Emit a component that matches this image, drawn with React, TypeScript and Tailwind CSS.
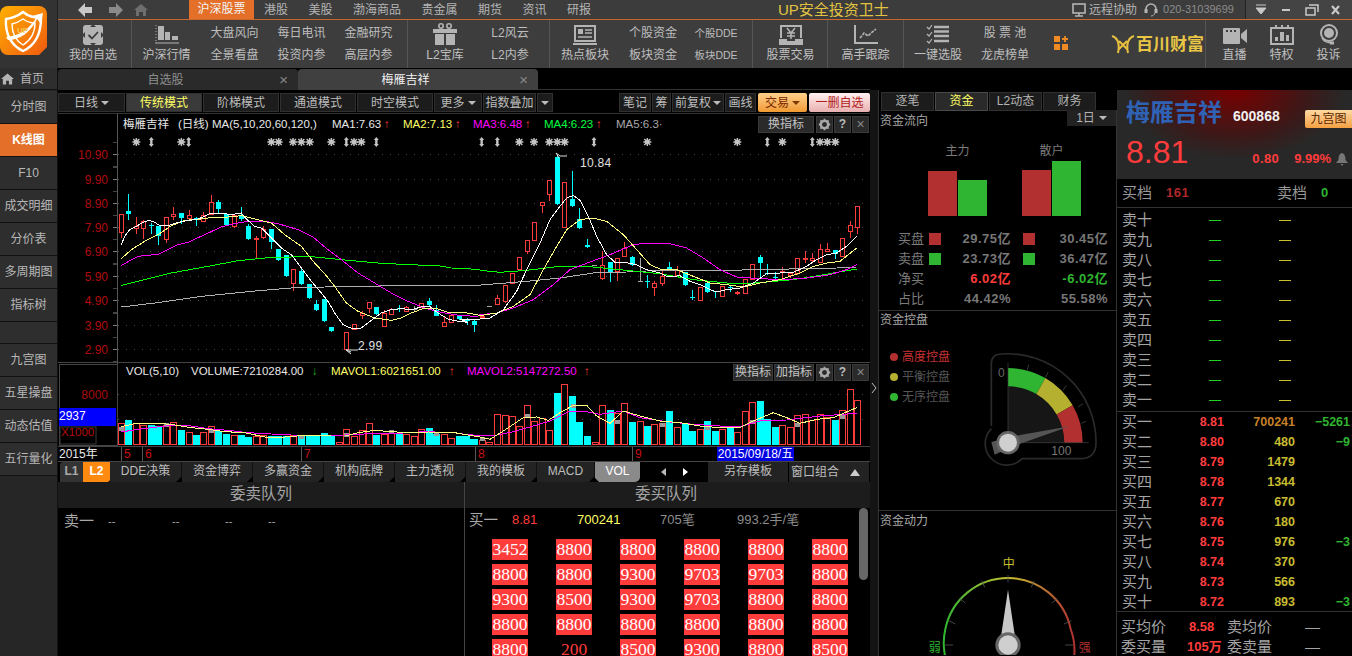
import { ReactNode } from "react";

// candle: [x, bodyTop, bodyBottom, high, low, kind] in 3x crop units, kind 0 red, 1 cyan, 2 grey
type Candle = [number, number, number, number, number, number];

const left: Candle[] = [
  [190, 303, 358, 303, 375, 0], [211, 295, 303, 243, 320, 1], [233, 338, 346, 312, 362, 0], [256, 325, 345, 322, 378, 0],
  [279, 335, 338, 330, 362, 1], [301, 340, 368, 340, 396, 1], [325, 313, 377, 313, 390, 0], [346, 304, 309, 282, 320, 0],
  [370, 300, 316, 300, 332, 1], [392, 307, 315, 292, 322, 0], [414, 315, 317, 312, 340, 1], [436, 305, 323, 298, 328, 0],
  [459, 268, 303, 246, 305, 0], [481, 268, 288, 261, 303, 1], [505, 302, 336, 300, 340, 1], [527, 307, 340, 302, 344, 0],
  [550, 305, 318, 282, 325, 1], [571, 340, 378, 334, 380, 1], [595, 375, 379, 370, 435, 0], [616, 348, 372, 338, 377, 0],
  [640, 348, 386, 348, 408, 1], [661, 408, 441, 408, 443, 1], [685, 426, 489, 426, 491, 1], [706, 469, 509, 467, 533, 0],
  [730, 474, 513, 467, 515, 1], [754, 513, 555, 513, 557, 1], [775, 573, 591, 560, 594, 1], [798, 558, 624, 558, 627, 1],
  [820, 642, 654, 642, 656, 1], [865, 658, 707, 658, 707, 0], [889, 632, 648, 632, 650, 0], [911, 600, 607, 595, 618, 0],
  [934, 568, 584, 568, 600, 0], [955, 582, 604, 582, 606, 1], [979, 601, 638, 592, 638, 0], [1000, 587, 604, 584, 604, 0],
  [1024, 585, 587, 575, 597, 1], [1045, 583, 594, 580, 598, 0], [1069, 588, 590, 580, 596, 2], [1090, 569, 583, 569, 585, 0],
  [1114, 565, 576, 555, 580, 1], [1135, 590, 609, 576, 610, 1], [1159, 628, 640, 610, 640, 0], [1180, 606, 627, 604, 628, 0],
  [1204, 610, 618, 610, 622, 1], [1226, 622, 624, 615, 636, 1], [1249, 625, 637, 620, 657, 1],
];

const right: Candle[] = [
  [65, 608, 612, 606, 614, 0], [88, 579, 581, 579, 581, 2], [112, 556, 572, 546, 572, 0], [134, 516, 563, 516, 570, 0],
  [157, 479, 509, 479, 511, 0], [178, 433, 467, 433, 472, 0], [202, 382, 413, 382, 422, 0], [223, 328, 382, 328, 382, 0],
  [247, 268, 277, 268, 300, 0], [268, 202, 242, 202, 264, 0], [292, 132, 273, 125, 275, 1], [313, 208, 341, 208, 341, 0],
  [337, 258, 279, 174, 282, 1], [358, 318, 345, 286, 348, 1], [382, 396, 402, 378, 404, 1], [402, 455, 457, 455, 457, 2],
  [427, 457, 495, 414, 500, 0], [449, 447, 479, 447, 507, 1], [472, 436, 475, 436, 503, 0], [493, 405, 428, 388, 428, 0],
  [517, 432, 456, 430, 458, 1], [539, 504, 506, 436, 506, 2], [562, 504, 506, 485, 524, 1], [583, 511, 521, 505, 548, 0],
  [607, 488, 509, 470, 518, 0], [628, 463, 469, 447, 470, 1], [652, 472, 485, 460, 487, 0], [676, 478, 515, 478, 518, 1],
  [697, 552, 556, 532, 560, 1], [721, 523, 560, 523, 560, 0], [742, 510, 537, 508, 540, 1], [766, 535, 538, 535, 555, 1],
  [787, 520, 548, 518, 552, 0], [811, 522, 524, 518, 538, 1], [832, 538, 541, 535, 545, 0], [856, 497, 539, 497, 539, 0],
  [877, 454, 499, 454, 502, 0], [901, 432, 450, 426, 494, 1], [922, 480, 484, 453, 486, 1], [946, 492, 495, 478, 503, 1],
  [967, 474, 478, 462, 494, 0], [991, 481, 485, 478, 494, 0], [1012, 436, 481, 436, 485, 0], [1036, 436, 438, 414, 449, 0],
  [1057, 436, 442, 420, 449, 0], [1081, 408, 448, 392, 450, 0], [1102, 408, 414, 390, 418, 0], [1126, 411, 423, 411, 438, 1],
  [1147, 376, 428, 376, 432, 0], [1171, 337, 355, 324, 375, 0], [1192, 280, 343, 280, 362, 0],
];

const candles: Candle[] = [...left, ...right.map((c) => [c[0] + 1206, c[1], c[2], c[3], c[4], c[5]] as Candle)];

const maLines: { color: string; a: number[]; b: number[] }[] = [
  { color: "#b0b0b0", a: [190, 582, 290, 570, 430, 550, 580, 535, 700, 525, 800, 522, 1080, 517, 1258, 517], b: [100, 513, 200, 505, 300, 495, 400, 480, 500, 477, 600, 472, 800, 472, 1130, 465, 1190, 462] },
  { color: "#00ff00", a: [190, 517, 260, 500, 340, 480, 450, 460, 540, 443, 640, 433, 760, 431, 850, 440, 960, 450, 1050, 455, 1140, 458, 1180, 465, 1258, 469], b: [70, 473, 120, 478, 200, 472, 300, 460, 400, 462, 500, 472, 600, 482, 700, 500, 800, 510, 860, 512, 920, 507, 1000, 500, 1080, 487, 1190, 468] },
  { color: "#ff00ff", a: [190, 457, 240, 430, 300, 424, 360, 395, 390, 388, 440, 365, 490, 342, 530, 332, 570, 325, 620, 325, 660, 332, 720, 350, 765, 372, 810, 410, 850, 440, 900, 480, 950, 510, 1000, 540, 1050, 565, 1100, 585, 1150, 598, 1210, 608, 1258, 610], b: [60, 605, 110, 600, 160, 585, 220, 560, 280, 515, 330, 470, 390, 447, 450, 425, 520, 395, 560, 390, 630, 392, 680, 405, 730, 435, 780, 470, 830, 492, 900, 497, 970, 500, 1040, 495, 1110, 485, 1160, 470, 1190, 455] },
  { color: "#ffff80", a: [190, 437, 220, 410, 260, 385, 300, 365, 340, 338, 380, 322, 430, 318, 470, 312, 510, 312, 550, 308, 590, 318, 640, 330, 680, 365, 730, 400, 770, 450, 800, 482, 830, 520, 865, 570, 900, 595, 950, 615, 1000, 622, 1030, 615, 1060, 600, 1100, 585, 1130, 585, 1170, 598, 1210, 597, 1258, 605], b: [60, 608, 110, 600, 160, 580, 210, 545, 250, 470, 290, 400, 320, 350, 360, 320, 400, 315, 440, 325, 490, 365, 530, 410, 570, 455, 600, 468, 650, 470, 700, 490, 750, 510, 800, 515, 850, 522, 900, 510, 960, 500, 1020, 480, 1060, 460, 1100, 450, 1140, 445, 1190, 405] },
  { color: "#ffffff", a: [190, 395, 200, 370, 215, 350, 235, 340, 255, 328, 275, 322, 290, 328, 305, 338, 330, 338, 360, 328, 390, 322, 415, 320, 440, 310, 460, 300, 490, 300, 520, 305, 550, 300, 565, 318, 590, 340, 610, 345, 640, 375, 670, 405, 700, 425, 730, 465, 760, 505, 790, 540, 810, 565, 830, 600, 855, 635, 885, 648, 910, 645, 940, 622, 970, 600, 1000, 590, 1030, 587, 1060, 590, 1090, 582, 1115, 580, 1140, 600, 1170, 618, 1200, 625, 1230, 628], b: [0, 618, 40, 620, 90, 615, 130, 590, 170, 535, 200, 470, 240, 390, 270, 320, 300, 280, 320, 255, 340, 247, 360, 262, 385, 310, 410, 370, 440, 425, 465, 448, 500, 449, 530, 455, 560, 470, 600, 480, 625, 492, 660, 488, 690, 505, 720, 515, 750, 530, 770, 537, 800, 530, 840, 525, 880, 510, 920, 482, 960, 480, 1000, 478, 1040, 460, 1070, 440, 1100, 425, 1130, 420, 1160, 400, 1190, 370] },
];

// volume bar: [x, top, kind]
const volA: number[][] = [
  [190, 187, 0], [211, 177, 1], [235, 187, 0], [256, 193, 0], [279, 192, 1], [301, 195, 1], [325, 192, 0], [346, 184, 0], [370, 207, 1], [392, 214, 0],
  [414, 222, 1], [436, 213, 0], [459, 196, 0], [481, 210, 1], [505, 218, 1], [527, 223, 0], [550, 222, 1], [571, 228, 1], [595, 226, 0], [616, 222, 0],
  [640, 226, 1], [661, 226, 1], [685, 226, 1], [706, 222, 0], [730, 226, 1], [754, 226, 1], [775, 226, 1], [798, 216, 1], [820, 224, 1], [843, 244, 0],
  [865, 205, 0], [889, 224, 0], [911, 208, 0], [934, 187, 0], [955, 222, 1], [979, 218, 0], [1000, 216, 0], [1024, 218, 1], [1045, 218, 0], [1069, 226, 0],
  [1090, 205, 0], [1114, 201, 1], [1135, 218, 1], [1159, 220, 0], [1180, 230, 0], [1204, 225, 1], [1226, 233, 1],
];
const volB: number[][] = [
  [19, 225, 1], [42, 233, 1], [65, 238, 0], [88, 244, 0], [112, 160, 0], [134, 162, 0], [157, 166, 0], [178, 195, 0], [202, 133, 0], [223, 180, 0],
  [247, 172, 0], [268, 208, 0], [292, 96, 1], [313, 70, 0], [337, 105, 1], [358, 183, 1], [382, 225, 1], [404, 244, 0], [427, 133, 0], [449, 147, 1],
  [472, 155, 0], [493, 127, 0], [517, 183, 1], [539, 181, 0], [562, 194, 1], [583, 190, 0], [607, 185, 0], [628, 150, 1], [652, 199, 0], [676, 188, 1],
  [697, 210, 1], [721, 205, 0], [742, 180, 1], [766, 210, 1], [787, 203, 0], [811, 200, 1], [832, 214, 0], [856, 151, 0], [877, 124, 0], [901, 120, 1],
  [922, 175, 1], [946, 198, 1], [967, 193, 0], [991, 199, 0], [1012, 163, 0], [1036, 160, 0], [1057, 176, 0], [1081, 160, 0], [1102, 167, 0], [1126, 178, 1],
  [1147, 148, 0], [1171, 85, 0], [1192, 118, 0],
];
const volLines = [
  { color: "#ff00ff", a: [190, 213, 240, 205, 290, 199, 340, 193, 400, 195, 450, 203, 510, 208, 570, 215, 640, 219, 700, 222, 780, 223, 860, 222, 940, 218, 1020, 217, 1100, 212, 1190, 215], b: [0, 218, 70, 225, 110, 222, 160, 212, 220, 195, 270, 180, 330, 150, 370, 150, 420, 160, 490, 150, 540, 170, 620, 182, 700, 190, 780, 195, 840, 197, 900, 180, 980, 177, 1080, 165, 1190, 157] },
  { color: "#ffff80", a: [190, 197, 235, 187, 290, 187, 340, 190, 400, 200, 450, 205, 500, 212, 560, 215, 620, 228, 680, 228, 730, 224, 820, 225, 860, 225, 900, 215, 950, 208, 1000, 212, 1050, 215, 1110, 213, 1190, 215], b: [0, 218, 60, 228, 90, 235, 130, 210, 190, 170, 230, 168, 265, 178, 300, 155, 340, 133, 380, 133, 410, 165, 450, 187, 490, 150, 540, 165, 600, 180, 660, 185, 720, 195, 780, 200, 840, 200, 880, 180, 940, 155, 980, 170, 1020, 187, 1070, 175, 1120, 170, 1190, 140] },
];
const volDots = [[121, 426], [166, 422], [211, 428], [301, 434], [346, 432], [391, 429], [436, 431], [482, 436], [527, 413], [573, 403], [617, 419], [662, 422], [707, 425], [752, 419], [797, 422], [842, 414]];

const toPoints = (a: number[], b: number[], yBase: number) => {
  const pts: string[] = [];
  for (let i = 0; i < a.length; i += 2) pts.push(`${58 + a[i] / 3},${yBase + a[i + 1] / 3}`);
  for (let i = 0; i < b.length; i += 2) pts.push(`${460 + b[i] / 3},${yBase + b[i + 1] / 3}`);
  return pts.join(" ");
};

const stars = [235, 370, 640, 662, 705, 730, 755, 820, 888, 910, 1384, 1428, 1474, 1498, 1520, 1768, 2038, 2173, 2286, 2308, 2332];
const diamonds = [280, 392, 865, 955, 1271, 1318, 1608, 2128, 2263];

const Star = ({ x, y }: { x: number; y: number }) => (
  <g stroke="#c4c4c4" strokeWidth="1.4">
    <path d={`M${x - 4} ${y}H${x + 4}M${x} ${y - 4}V${y + 4}M${x - 3} ${y - 3}L${x + 3} ${y + 3}M${x + 3} ${y - 3}L${x - 3} ${y + 3}`} />
    <circle cx={x} cy={y} r="2.4" fill="#c4c4c4" stroke="none" />
  </g>
);

const Diamond = ({ x, y }: { x: number; y: number }) => (
  <path d={`M${x} ${y - 5}L${x + 2.5} ${y - 2}H${x + 1.2}V${y + 2}H${x + 2.5}L${x} ${y + 5}L${x - 2.5} ${y + 2}H${x - 1.2}V${y - 2}H${x - 2.5}Z`} fill="#c4c4c4" />
);

const priceTicks = [
  ["10.90", 124], ["9.90", 197], ["8.90", 270], ["7.90", 343], ["6.90", 415], ["5.90", 489], ["4.90", 562], ["3.90", 636], ["2.90", 709],
] as [string, number][];

const Legend = ({ x, y, color, children }: { x: number; y: number; color: string; children: ReactNode }) => (
  <text x={x} y={y} fill={color} fontSize="11.5">{children}</text>
);

const KChart = () => (
  <svg viewBox="58 113 812 250" className="block w-[812px] h-[250px]">
    {priceTicks.map(([label, z]) => {
      const y = Math.round(112 + z / 3) + 0.5;
      return (
        <g key={label}>
          <text x="108" y={y + 4} textAnchor="end" fill="#b00c0c" fontSize="12">{label}</text>
          <path d={`M113 ${y}H118`} stroke="#777" />
          <path d={`M113 ${y + 12}H118M113 ${y - 12}H118`} stroke="#444" />
          <line x1="118" x2="866" y1={y} y2={y} stroke="#444" strokeDasharray="1 7" />
        </g>
      );
    })}
    <line x1="117.5" x2="117.5" y1="113" y2="363" stroke="#555" />
    {candles.map(([z, top, bot, hi, lo, kind], i) => {
      const x = Math.round(58 + z / 3);
      const color = kind === 0 ? "#ff3c3c" : kind === 1 ? "#00ffff" : "#a8a8a8";
      const t = Math.round(112 + top / 3);
      const b = Math.round(112 + bot / 3);
      return (
        <g key={i} shapeRendering="crispEdges">
          <line x1={x + 0.5} x2={x + 0.5} y1={112 + hi / 3} y2={112 + lo / 3} stroke={color} />
          {kind === 0 ? (
            <rect x={x - 2 + 0.5} y={t + 0.5} width="4" height={Math.max(b - t, 1)} fill="#000" stroke={color} />
          ) : (
            <rect x={x - 2} y={t} width="5" height={Math.max(b - t, 1)} fill={color} />
          )}
        </g>
      );
    })}
    {maLines.map((l) => (
      <polyline key={l.color} points={toPoints(l.a, l.b, 112)} fill="none" stroke={l.color} strokeWidth="1" shapeRendering="crispEdges" />
    ))}
    {stars.map((z) => <Star key={z} x={58 + z / 3} y={141} />)}
    {diamonds.map((z) => <Diamond key={z} x={58 + z / 3} y={141} />)}

    <text x="123" y="127" fill="#e8e8e8" fontSize="11.5">梅雁吉祥</text>
    <text x="178" y="127" fill="#e8e8e8" fontSize="11.5">(日线)</text>
    <text x="212" y="127" fill="#e8e8e8" fontSize="11.5">MA(5,10,20,60,120,)</text>
    <Legend x={332} y={127} color="#e8e8e8">MA1:7.63</Legend>
    <Legend x={384} y={127} color="#ff3c3c">↑</Legend>
    <Legend x={403} y={127} color="#ffff66">MA2:7.13</Legend>
    <Legend x={455} y={127} color="#ff3c3c">↑</Legend>
    <Legend x={473} y={127} color="#ff00ff">MA3:6.48</Legend>
    <Legend x={525} y={127} color="#ff3c3c">↑</Legend>
    <Legend x={544} y={127} color="#00ff40">MA4:6.23</Legend>
    <Legend x={596} y={127} color="#ff3c3c">↑</Legend>
    <Legend x={616} y={127} color="#a8a8a8">MA5:6.3·</Legend>

    <path d="M559 157L556 152L560 155H567" fill="none" stroke="#ddd" />
    <text x="580" y="166" fill="#e0e0e0" fontSize="12" letterSpacing=".3">10.84</text>
    <path d="M351 351L346 349H358M346 349L351 353" fill="none" stroke="#ddd" />
    <text x="358" y="349" fill="#e0e0e0" fontSize="12" letterSpacing=".3">2.99</text>
  </svg>
);

const VolChart = () => (
  <svg viewBox="58 362 812 84" className="block w-[812px] h-[84px]">
    <rect x="59.5" y="363.5" width="58" height="81" fill="none" stroke="#444" />
    <rect x="60" y="426" width="36" height="17" fill="none" stroke="#3a3a3a" />
    <text x="108" y="398" textAnchor="end" fill="#a80c0c" fontSize="12">8000</text>
    <rect x="59" y="407" width="57" height="18" fill="#0000ff" />
    <text x="59" y="419" fill="#fff" fontSize="12">2937</text>
    <text x="61" y="435" fill="#b00c0c" fontSize="11.5">X1000</text>
    {[393, 418].map((y) => (
      <line key={y} x1="118" x2="866" y1={y + 0.5} y2={y + 0.5} stroke="#444" strokeDasharray="1 7" />
    ))}
    {[...volA.map(([z, t, k]) => [58 + z / 3, t, k]), ...volB.map(([z, t, k]) => [460 + z / 3, t, k])].map(([x, t, k], i) => {
      const top = Math.round(360 + t / 3);
      const rx = Math.round(x);
      return k === 0 ? (
        <rect key={i} x={rx - 3 + 0.5} y={top + 0.5} width="6" height={443 - top} fill="#000" stroke="#ff3c3c" shapeRendering="crispEdges" />
      ) : (
        <rect key={i} x={rx - 3} y={top} width="7" height={444 - top} fill="#00ffff" shapeRendering="crispEdges" />
      );
    })}
    {volDots.map(([x, y]) => (
      <rect key={x} x={x - 2} y={y} width="5" height="4" fill="#999" />
    ))}
    {volLines.map((l) => (
      <polyline key={l.color} points={toPoints(l.a, l.b, 360)} fill="none" stroke={l.color} strokeWidth="1" shapeRendering="crispEdges" />
    ))}
    <text x="126" y="374" fill="#e8e8e8" fontSize="11.5">VOL(5,10)</text>
    <text x="191" y="374" fill="#e8e8e8" fontSize="11.5">VOLUME:7210284.00</text>
    <text x="312" y="374" fill="#22c022" fontSize="11.5">↓</text>
    <text x="331" y="374" fill="#ffff66" fontSize="11.5">MAVOL1:6021651.00</text>
    <text x="449" y="374" fill="#ff3c3c" fontSize="11.5">↑</text>
    <text x="467" y="374" fill="#ff00ff" fontSize="11.5">MAVOL2:5147272.50</text>
    <text x="584" y="374" fill="#ff3c3c" fontSize="11.5">↑</text>
  </svg>
);

const Gear = () => (
  <svg viewBox="0 0 16 16" className="w-[13px] h-[13px]">
    <circle cx="8" cy="8" r="4.5" fill="none" stroke="#aaa" strokeWidth="3" />
    <path d="M8 1V4M8 12V15M1 8H4M12 8H15M3 3L5 5M11 11L13 13M13 3L11 5M5 11L3 13" stroke="#aaa" strokeWidth="2.2" />
  </svg>
);

const ChartButtons = ({ names, w }: { names: string[]; w: string }) => (
  <div className="flex gap-[1px] items-stretch h-[17px] text-[#c4c4c4] text-[12px] leading-[17px]">
    {names.map((n) => (
      <div key={n} className={`bg-[#2a2a2a] border border-[#3a3a3a] text-center leading-[15px] ${w}`}>{n}</div>
    ))}
    <div className="bg-[#2a2a2a] border border-[#3a3a3a] w-[17px] flex items-center justify-center ml-[1px]"><Gear /></div>
    <div className="bg-[#2a2a2a] border border-[#3a3a3a] w-[17px] text-center leading-[15px] font-bold text-[#bbb]">?</div>
    <div className="bg-[#2a2a2a] border border-[#3a3a3a] w-[17px] text-center leading-[14px] text-[#888] text-[14px]">×</div>
  </div>
);

const Caret = ({ className = "" }: { className?: string }) => (
  <span className={`inline-block w-0 h-0 border-l-[4px] border-r-[4px] border-t-[4px] border-l-transparent border-r-transparent border-t-[#bbb] ${className}`} />
);

const Tool = ({ children, label, w }: { children: ReactNode; label: string; w: string }) => (
  <div className={`flex flex-col items-center shrink-0 ${w}`}>
    <div className="h-[22px] mt-[3px] flex items-end justify-center">{children}</div>
    <div className="leading-[18px] mt-[1px] text-[12px] text-[#c0c0c0] whitespace-nowrap">{label}</div>
  </div>
);

const Two = ({ top, bottom, w, small }: { top: string; bottom: string; w: string; small?: boolean }) => (
  <div className={`flex flex-col items-center shrink-0 text-[#bdbdbd] leading-[22px] pt-[2px] ${small ? "text-[10.500px]" : "text-[12px]"} ${w}`}>
    <div className="whitespace-pre">{top}</div>
    <div className="whitespace-pre">{bottom}</div>
  </div>
);

const Group = ({ children, w }: { children: ReactNode; w: string }) => (
  <div className={`flex h-full shrink-0 border-r border-[#555] ${w}`}>{children}</div>
);

const G = "#b4b4b4";

const Header = () => (
  <div className="flex h-[68px] bg-[#3c3c3c] shrink-0">
    <div className="w-[58px] shrink-0 border-r border-[#222] bg-[#333] pt-[6px]">
      <svg viewBox="0 0 47 50" className="w-[47px] h-[50px] block">
        <defs>
          <linearGradient id="logo" x1="0" y1="0" x2="1" y2="1">
            <stop offset="0" stopColor="#ffb000" />
            <stop offset="1" stopColor="#f05a10" />
          </linearGradient>
        </defs>
        <rect width="47" height="49" rx="8" fill="url(#logo)" />
        <path d="M6 13C14 12 19 9 23 6C28 10 34 12 41 12C41 26 36 39 23 45C10 39 5 26 6 13Z" fill="none" stroke="#fff" strokeWidth="2.4" />
        <path d="M12 18C17 17 20 15 23 13C27 16 31 17 35 17C35 27 31 34 23 39C15 34 12 27 12 18Z" fill="none" stroke="#fff" strokeWidth="1.4" />
        <path d="M8 34C20 34 31 26 37 13L41 18L43 7L32 10L36 12C30 22 20 30 6 31Z" fill="#fff" />
        <text x="17" y="27" fontSize="8" fontWeight="700" fill="#f6c75a">UP</text>
        <path d="M38 50L47 41V49H40Z" fill="#333" />
      </svg>
    </div>
    <div className="flex flex-col flex-1 min-w-0">
      <div className="flex items-center h-[19px] text-[12px] text-[#b4b4b4] shrink-0 whitespace-nowrap">
        <svg viewBox="0 0 70 14" className="w-[70px] h-[14px] ml-[20px] shrink-0">
          <path d="M0 7L7 0V4H14V10H7V14Z" fill="#c8c8c8" />
          <path d="M45 7L38 0V4H31V10H38V14Z" fill="#8a8a8a" />
          <path d="M63 1L70 7H68V13H65V9H61V13H58V7H56Z" fill="#6e6e6e" />
        </svg>
        <div className="ml-[41px] w-[65px] h-[19px] bg-[#e36f28] text-[#f4f4f4] text-center leading-[19px] shrink-0">沪深股票</div>
        <div className="flex gap-[20.5px] ml-[10px] w-[324px] shrink-0">
          {["港股", "美股", "渤海商品", "贵金属", "期货", "资讯", "研报"].map((t) => <span key={t}>{t}</span>)}
        </div>
        <div className="ml-[190px] text-[15px] text-[#e2c341] w-[110px] leading-[19px] shrink-0">UP安全投资卫士</div>
        <svg viewBox="0 0 14 14" className="w-[14px] h-[14px] ml-[184px] shrink-0">
          <rect x="1" y="1" width="12" height="9" fill="none" stroke={G} strokeWidth="1.6" />
          <path d="M3 13H11M7 10V13" stroke={G} strokeWidth="1.6" />
        </svg>
        <span className="ml-[3px]">远程协助</span>
        <svg viewBox="0 0 14 14" className="w-[14px] h-[14px] ml-[7px] shrink-0">
          <path d="M2 8V6A5 5 0 0 1 12 6V8" fill="none" stroke={G} strokeWidth="1.6" />
          <rect x="0.5" y="6" width="3" height="4" fill={G} />
          <rect x="10.5" y="6" width="3" height="4" fill={G} />
          <path d="M11 10C10 12 9 13 7 13" fill="none" stroke={G} />
        </svg>
        <span className="ml-[5px] text-[11px] text-[#8c8c8c]">020-31039699</span>
        <div className="ml-[11px] h-[19px] flex-1 border-l border-[#222] bg-[#444] flex items-center">
          <svg viewBox="0 0 100 14" className="w-[100px] h-[14px] ml-[7px]">
            <path d="M3 2H13M3 5H13L8 11Z" fill="#c8c8c8" stroke="#c8c8c8" />
            <path d="M29 7H37" stroke="#c8c8c8" strokeWidth="2" />
            <path d="M53 5H62V12H53ZM56 2H65V9" fill="none" stroke="#c8c8c8" strokeWidth="1.5" />
            <path d="M79 3L86 11M86 3L79 11" stroke="#c8c8c8" strokeWidth="2.2" />
          </svg>
        </div>
      </div>
      <div className="h-[1px] bg-[#c8682c] shrink-0" />
      <div className="flex flex-1 min-h-0 bg-[#3d3d3d]">
        <Group w="w-[74px]">
          <Tool label="我的自选" w="w-[70px]">
            <svg viewBox="0 0 20 20" className="w-[20px] h-[20px]">
              <rect width="20" height="20" rx="3" fill={G} />
              <path d="M10 -1L13 2H7ZM10 21L13 18H7ZM-1 10L2 7V13ZM21 10L18 7V13Z" fill="#3d3d3d" />
              <path d="M5.5 10L9 13.5L15 7" fill="none" stroke="#3d3d3d" strokeWidth="1.8" />
            </svg>
          </Tool>
        </Group>
        <Group w="w-[276px]">
          <Tool label="沪深行情" w="w-[69px]">
            <svg viewBox="0 0 24 20" className="w-[24px] h-[20px]">
              <path d="M1 0V16" stroke={G} strokeDasharray="1 2" />
              <rect x="3" y="1" width="6" height="14" fill={G} />
              <rect x="10" y="7" width="5" height="8" fill={G} />
              <rect x="17" y="11" width="6" height="4" fill={G} />
              <path d="M0 18H24" stroke={G} />
            </svg>
          </Tool>
          <Two top="大盘风向" bottom="全景看盘" w="w-[67px]" />
          <Two top="每日电讯" bottom="投资内参" w="w-[67px]" />
          <Two top="金融研究" bottom="高层内参" w="w-[67px]" />
        </Group>
        <Group w="w-[142px]">
          <Tool label="L2宝库" w="w-[74px]">
            <svg viewBox="0 0 24 22" className="w-[24px] h-[22px]">
              <circle cx="8" cy="3" r="2.2" fill="none" stroke={G} strokeWidth="1.6" />
              <circle cx="16" cy="3" r="2.2" fill="none" stroke={G} strokeWidth="1.6" />
              <rect x="0" y="6" width="24" height="4" fill={G} />
              <rect x="2" y="11" width="9" height="11" fill={G} />
              <rect x="13" y="11" width="9" height="11" fill={G} />
            </svg>
          </Tool>
          <Two top="L2风云" bottom="L2内参" w="w-[56px]" />
        </Group>
        <Group w="w-[203px]">
          <Tool label="热点板块" w="w-[70px]">
            <svg viewBox="0 0 24 20" className="w-[24px] h-[20px]">
              <rect x="2" y="1" width="20" height="15" fill="none" stroke={G} strokeWidth="2" />
              <rect x="5" y="4" width="5" height="5" fill={G} />
              <path d="M12 5H19M12 8H19M5 12H19" stroke={G} strokeWidth="1.4" />
              <path d="M0 19H24" stroke={G} strokeWidth="2" />
            </svg>
          </Tool>
          <Two top="个股资金" bottom="板块资金" w="w-[66px]" />
          <Two top="个股DDE" bottom="板块DDE" w="w-[60px]" small />
        </Group>
        <Group w="w-[75px]">
          <Tool label="股票交易" w="w-[75px]">
            <svg viewBox="0 0 24 20" className="w-[24px] h-[20px]">
              <path d="M2 13V1H22V13" fill="none" stroke={G} strokeWidth="2" />
              <path d="M8 3L12 8L16 3M12 8V14M8 8H16M8 11H16" fill="none" stroke={G} strokeWidth="1.5" />
              <path d="M0 14H8V16H16V14H24V20H0Z" fill={G} />
            </svg>
          </Tool>
        </Group>
        <Group w="w-[76px]">
          <Tool label="高手跟踪" w="w-[75px]">
            <svg viewBox="0 0 24 20" className="w-[24px] h-[20px]">
              <path d="M1 0V18H24" fill="none" stroke={G} strokeWidth="2" />
              <path d="M6 13L10 8L14 11L17 8L22 4" fill="none" stroke={G} strokeWidth="1.6" strokeDasharray="3 1" />
            </svg>
          </Tool>
        </Group>
        <Group w="w-[302px]">
          <Tool label="一键选股" w="w-[68px]">
            <svg viewBox="0 0 24 20" className="w-[24px] h-[20px]">
              <path d="M1 2L3 4L6 0M1 9L3 11L6 7M1 16L3 18L6 14" fill="none" stroke={G} strokeWidth="1.2" />
              <path d="M8 2H23M8 6.500H23M8 11H23M8 16H23" stroke={G} strokeWidth="2.6" />
            </svg>
          </Tool>
          <Two top="股 票 池" bottom="龙虎榜单" w="w-[66px]" />
          <svg viewBox="0 0 14 14" className="w-[14px] h-[14px] ml-[16px] mt-[16px] shrink-0">
            <rect width="6" height="6" fill="#f08a24" />
            <rect y="8" width="6" height="6" fill="#f08a24" />
            <rect x="8" y="8" width="6" height="6" fill="#f08a24" />
            <path d="M11 0V6M8 3H14" stroke="#f08a24" strokeWidth="1.8" />
          </svg>
          <svg viewBox="0 0 24 20" className="w-[24px] h-[20px] ml-[43px] mt-[15px] shrink-0">
            <path d="M1 1C7 3 9 8 7 18M23 1C17 3 15 8 17 18M8 6L16 14M16 6L8 14" fill="none" stroke="#e8c040" strokeWidth="2" />
          </svg>
          <span className="ml-[1px] mt-[13px] text-[17px] leading-[24px] font-bold text-[#e8c545] whitespace-nowrap">百川财富</span>
        </Group>
        <div className="flex pl-[5px]">
          <Tool label="直播" w="w-[47px]">
            <svg viewBox="0 0 24 18" className="w-[24px] h-[18px]">
              <rect y="1" width="17" height="16" rx="1" fill={G} />
              <path d="M18 7L24 2V16L18 11Z" fill={G} />
              <path d="M3 4H5M7 4H9M11 4H13" stroke="#3d3d3d" strokeWidth="2" />
            </svg>
          </Tool>
          <Tool label="特权" w="w-[47px]">
            <svg viewBox="0 0 24 20" className="w-[24px] h-[20px]">
              <rect x="1" y="3" width="22" height="16" fill="none" stroke={G} strokeWidth="2" />
              <path d="M5 0H7V3H5ZM11 0H13V3H11ZM17 0H19V3H17Z" fill={G} />
              <rect x="5" y="12" width="3" height="4" fill={G} />
              <rect x="10" y="7" width="4" height="9" fill={G} />
              <rect x="16" y="10" width="3" height="6" fill={G} />
            </svg>
          </Tool>
          <Tool label="投诉" w="w-[47px]">
            <svg viewBox="0 0 22 21" className="w-[22px] h-[21px]">
              <circle cx="11" cy="9" r="8" fill="none" stroke={G} strokeWidth="2" />
              <circle cx="11" cy="9" r="5" fill={G} />
              <path d="M4 14C6 18 9 19 14 19" fill="none" stroke={G} strokeWidth="1.4" />
              <rect x="12" y="17.500" width="4" height="3" fill={G} />
            </svg>
          </Tool>
        </div>
      </div>
    </div>
  </div>
);

const sideItems = [
  { label: "分时图", h: "h-[33px]" }, { label: "K线图", h: "h-[33px]", on: true }, { label: "F10", h: "h-[33px]" },
  { label: "成交明细", h: "h-[33px]" }, { label: "分价表", h: "h-[33px]" }, { label: "多周期图", h: "h-[33px]" },
  { label: "指标树", h: "h-[33px]" }, { label: "", h: "h-[22px]" }, { label: "九宫图", h: "h-[33px]" },
  { label: "五星操盘", h: "h-[33px]" }, { label: "动态估值", h: "h-[33px]" }, { label: "五行量化", h: "h-[33px]" },
];

const Sidebar = () => (
  <div className="w-[58px] shrink-0 flex flex-col bg-[#262626] border-r border-[#111] text-[12px] text-[#b8b8b8]">
    <div className="h-[22px] flex items-center pl-[1px] bg-[#2e2e2e] border-b border-[#111] shrink-0">
      <svg viewBox="0 0 14 12" className="w-[13px] h-[12px]">
        <path d="M7 0L14 6H12V12H8.500V8H5.500V12H2V6H0Z" fill="#b4b4b4" />
      </svg>
      <span className="ml-[6px]">首页</span>
    </div>
    <div className="h-[1px] shrink-0" />
    {sideItems.map((s) => (
      <div
        key={s.label || "blank"}
        className={`${s.h} shrink-0 flex items-center justify-center border-b border-[#111] ${s.on ? "bg-[#e36f28] text-white font-bold" : "bg-[#2e2e2e]"}`}
      >
        {s.label}
      </div>
    ))}
  </div>
);

const TopTab = ({ label, on }: { label: string; on?: boolean }) => (
  <div className={`w-[240px] h-[21px] rounded-t-[4px] shrink-0 flex items-center relative text-[12px] ${on ? "bg-[#404040] text-[#f0f0f0]" : "bg-[#2a2a2a] text-[#8e8e8e]"}`}>
    <span className="w-full text-center pr-[25px]">{label}</span>
    <span className="absolute right-[10px] top-[1px] text-[15px] leading-[19px] text-[#888]">×</span>
  </div>
);

const ToolBtn = ({ children, w, on }: { children: ReactNode; w: string; on?: boolean }) => (
  <div className={`${w} h-[19px] shrink-0 flex items-center justify-center border border-[#303030] text-[12px] ${on ? "bg-[#3a3a3a] border-[#4a4a4a] text-[#ffff66]" : "bg-[#1c1c1c] text-[#bdbdbd]"}`}>
    {children}
  </div>
);

const Toolbar = () => (
  <div className="flex h-[19px] mt-[3px] shrink-0 gap-[1px] items-center">
    <ToolBtn w="w-[67px]">日线<Caret className="ml-[3px]" /></ToolBtn>
    <ToolBtn w="w-[76px]" on>传统模式</ToolBtn>
    <ToolBtn w="w-[76px]">阶梯模式</ToolBtn>
    <ToolBtn w="w-[76px]">通道模式</ToolBtn>
    <ToolBtn w="w-[76px]">时空模式</ToolBtn>
    <ToolBtn w="w-[48px]">更多<Caret className="ml-[3px]" /></ToolBtn>
    <ToolBtn w="w-[53px]">指数叠加</ToolBtn>
    <ToolBtn w="w-[16px]"><Caret /></ToolBtn>
    <div className="ml-[65px] flex gap-[1px]">
      <ToolBtn w="w-[32px]">笔记</ToolBtn>
      <ToolBtn w="w-[19px]">筹</ToolBtn>
      <ToolBtn w="w-[52px]">前复权<Caret className="ml-[2px]" /></ToolBtn>
      <ToolBtn w="w-[31px]">画线</ToolBtn>
    </div>
    <div className="ml-[1px] w-[49px] h-[19px] rounded-[2px] bg-gradient-to-b from-[#ffd08a] to-[#f09a30] text-[#7a2a00] text-[12px] flex items-center justify-center">
      交易
      <span className="ml-[3px] w-0 h-0 border-x-[4px] border-t-[4px] border-x-transparent border-t-[#7a3a00]" />
    </div>
    <div className="ml-[1px] w-[61px] h-[19px] rounded-[2px] bg-gradient-to-b from-[#fff0f0] to-[#e8b0b0] text-[#b02020] text-[12px] flex items-center justify-center whitespace-nowrap">
      一删自选
    </div>
  </div>
);

const subTabs = [
  { label: "DDE决策", w: "w-[72px]" }, { label: "资金博弈", w: "w-[71px]" }, { label: "多赢资金", w: "w-[71px]" }, { label: "机构底牌", w: "w-[71px]" },
  { label: "主力透视", w: "w-[71px]" }, { label: "我的模板", w: "w-[71px]" }, { label: "MACD", w: "w-[58px]" },
];

const queue = [
  ["3452", "8800", "8800", "8800", "8800", "8800"],
  ["8800", "8800", "9300", "9703", "9703", "8800"],
  ["9300", "8500", "9300", "9703", "8800", "8800"],
  ["8800", "8800", "8800", "8800", "8800", "8800"],
  ["8800", "200", "8500", "9300", "8800", "8500"],
];

const Main = () => (
  <div className="w-[812px] shrink-0 flex flex-col min-h-0">
    <div className="flex h-[22px] shrink-0 border-b border-[#333] items-start pt-[1px]">
      <TopTab label="自选股" />
      <TopTab label="梅雁吉祥" on />
    </div>
    <Toolbar />
    <div className="relative h-[250px] shrink-0 mt-[1px] border-t border-[#333]">
      <KChart />
      <div className="absolute left-[700px] top-[2px]"><ChartButtons names={["换指标"]} w="w-[56px]" /></div>
    </div>
    <div className="relative h-[84px] shrink-0 border-t border-[#444] -mt-[1px]">
      <VolChart />
      <div className="absolute left-[675px] top-[1px]"><ChartButtons names={["换指标", "加指标"]} w="w-[40px]" /></div>
    </div>
    <div className="relative h-[15px] shrink-0 border-t border-[#444] text-[12px] leading-[14px]">
      <span className="text-[#e8e8e8] ml-[1px]">2015年</span>
      <span className="absolute left-[63px] top-0 text-[#c81010] border-l border-[#555] pl-[2px]">5</span>
      <span className="absolute left-[84px] top-0 text-[#c81010] border-l border-[#555] pl-[2px]">6</span>
      <span className="absolute left-[243px] top-0 text-[#c81010] border-l border-[#555] pl-[2px]">7</span>
      <span className="absolute left-[417px] top-0 text-[#c81010] border-l border-[#555] pl-[2px]">8</span>
      <span className="absolute left-[574px] top-0 text-[#c81010] border-l border-[#555] pl-[2px]">9</span>
      <span className="absolute left-[659px] top-0 bg-[#0000e0] text-white w-[77px] text-center h-[14px] whitespace-nowrap">2015/09/18/五</span>
    </div>
    <div className="flex h-[21px] shrink-0 border-t border-[#444] text-[12px] text-[#bdbdbd] leading-[19px]">
      <div className="w-[2px]" />
      <div className="w-[23px] bg-[#333] text-[#aaa] text-center font-bold rounded-tl-[3px]">L1</div>
      <div className="w-[27px] bg-[#ff8a10] text-white text-center font-bold rounded-br-[3px]">L2</div>
      {subTabs.map((t) => (
        <div key={t.label} className={`${t.w} relative bg-[#232323] border-r border-[#111] text-center`}>
          {t.label}
          <span className="absolute -right-[5px] bottom-0 w-0 h-0 border-l-[5px] border-r-[5px] border-b-[5px] border-l-transparent border-r-transparent border-b-black" />
        </div>
      ))}
      <div className="w-[45px] bg-[#8a8a8a] text-white text-center rounded-br-[5px]">VOL</div>
      <div className="w-[68px] flex items-center justify-center gap-[17px]">
        <span className="w-0 h-0 border-y-[4px] border-r-[5px] border-y-transparent border-r-[#bbb]" />
        <span className="w-0 h-0 border-y-[4px] border-l-[5px] border-y-transparent border-l-white" />
      </div>
      <div className="w-[80px] bg-[#232323] text-center">另存模板</div>
      <div className="w-[80px] ml-[1px] bg-[#232323] pl-[2px] flex items-center whitespace-nowrap">
        窗口组合<span className="ml-[11px] w-0 h-0 border-x-[5px] border-b-[7px] border-x-transparent border-b-[#ccc]" />
      </div>
    </div>
    <div className="flex flex-1 min-h-0 overflow-hidden">
      <div className="w-[407px] shrink-0 flex flex-col border-r border-[#444]">
        <div className="h-[26px] bg-[#1c1c1c] text-center text-[15.5px] leading-[23px] text-[#a4a4a4] shrink-0">委卖队列</div>
        <div className="flex pl-[6px] pt-[3px] text-[15px] leading-[20px] text-[#a8a8a8]">
          <span className="w-[44px]">卖一</span>
          <span className="w-[64px] text-[11px]">--</span>
          <span className="w-[53px] text-[11px]">--</span>
          <span className="w-[43px] text-[11px]">--</span>
          <span className="text-[11px]">--</span>
        </div>
      </div>
      <div className="flex-1 relative flex flex-col">
        <div className="h-[26px] bg-[#1c1c1c] text-center text-[15.5px] leading-[23px] text-[#a4a4a4] pr-[3px] shrink-0">委买队列</div>
        <div className="flex pl-[4px] pt-[2px] h-[31px] text-[13px] leading-[20px] text-[#8c8c8c] shrink-0">
          <span className="w-[43px] text-[14.5px] text-[#a8a8a8]">买一</span>
          <span className="w-[65px] text-[#ff3c3c]">8.81</span>
          <span className="w-[83px] text-[#ffff66]">700241</span>
          <span className="w-[77px]">705笔</span>
          <span>993.2手/笔</span>
        </div>
        <div className="flex flex-col gap-[4px] pl-[27px]">
          {queue.map((row, i) => (
            <div key={i} className="flex gap-[28px]">
              {row.map((v, j) => (
                <div
                  key={j}
                  className={`w-[36px] h-[21px] text-center text-[17.5px] leading-[21px] whitespace-nowrap font-['Liberation_Serif',serif] ${v === "200" ? "text-[#ff3c3c]" : "bg-[#ff3c3c] text-white"}`}
                >
                  {v}
                </div>
              ))}
            </div>
          ))}
        </div>
        <div className="absolute right-[2px] top-[26px] w-[9px] h-[72px] rounded-[5px] bg-[#666]" />
      </div>
    </div>
  </div>
);

const Gutter = () => (
  <div className="w-[8px] shrink-0 mt-[22px] bg-[#141414] relative">
    <svg viewBox="0 0 6 10" className="absolute left-[1px] top-[293px] w-[6px] h-[10px]">
      <path d="M1 0L5 5L1 10" fill="none" stroke="#bbb" />
    </svg>
  </div>
);

const flowRows = [
  { label: "买盘", a: "29.75", b: "30.45", sq: "bg-[#b23030]" },
  { label: "卖盘", a: "23.73", b: "36.47", sq: "bg-[#2fb532]" },
];

const Money = ({ v, c, w }: { v: string; c: string; w: string }) => (
  <div className={`${w} text-right font-bold text-[13px] tracking-[0.5px] ${c}`}>{v}</div>
);

const MoneyPanel = () => (
  <div className="w-[239px] shrink-0 mt-[22px] flex flex-col border-l border-[#333] min-h-0">
    <div className="flex h-[20px] shrink-0 gap-[1px] pl-[2px] pt-[2px] text-[12px] text-[#b4b4b4]">
      {["逐笔", "资金", "L2动态", "财务"].map((t) => (
        <div key={t} className={`w-[53px] h-[19px] text-center leading-[17px] border ${t === "资金" ? "bg-[#2a2a2a] border-[#4a4a4a] text-[#ffff66]" : "bg-[#1c1c1c] border-[#303030]"}`}>{t}</div>
      ))}
    </div>
    <div className="h-[201px] shrink-0 border-b border-[#333] border-r pl-[1px] flex flex-col">
      <div className="flex justify-between items-start h-[20px]">
        <span className="text-[12px] text-[#a8a8a8] leading-[18px] mt-[2px]">资金流向</span>
        <div className="w-[49px] h-[16px] bg-[#222] flex items-center justify-center text-[12px] text-[#b4b4b4]">1日<Caret className="ml-[4px]" /></div>
      </div>
      <div className="flex pl-[48px] gap-[35px] mt-[11px] text-[12px] text-[#7c7c7c] text-center">
        <div className="w-[59px]">
          <div className="h-[20px] leading-[20px]">主力</div>
          <div className="flex items-end h-[55px] gap-[1px]">
            <div className="w-[29px] h-[45px] bg-[#b23030]" />
            <div className="w-[29px] h-[36px] bg-[#2fb532]" />
          </div>
        </div>
        <div className="w-[59px]">
          <div className="h-[20px] leading-[20px]">散户</div>
          <div className="flex items-end h-[55px] gap-[1px]">
            <div className="w-[29px] h-[46px] bg-[#b23030]" />
            <div className="w-[29px] h-[55px] bg-[#2fb532]" />
          </div>
        </div>
      </div>
      <div className="mt-[13px] text-[13px] text-[#7c7c7c] leading-[20px]">
        {flowRows.map((r) => (
          <div key={r.label} className="flex h-[20px] items-center pl-[18px]">
            <span className="w-[31px]">{r.label}</span>
            <span className={`w-[12px] h-[12px] ${r.sq}`} />
            <Money v={`${r.a}亿`} c="text-[#777]" w="w-[70px]" />
            <span className={`w-[12px] h-[12px] ml-[12px] ${r.sq}`} />
            <Money v={`${r.b}亿`} c="text-[#777]" w="w-[73px]" />
          </div>
        ))}
        <div className="flex h-[20px] items-center pl-[18px]">
          <span className="w-[43px]">净买</span>
          <Money v="6.02亿" c="text-[#ff3c3c]" w="w-[70px]" />
          <span className="w-[24px]" />
          <Money v="-6.02亿" c="text-[#2fb532]" w="w-[73px]" />
        </div>
        <div className="flex h-[20px] items-center pl-[18px]">
          <span className="w-[43px]">占比</span>
          <Money v="44.42%" c="text-[#777]" w="w-[70px]" />
          <span className="w-[24px]" />
          <Money v="55.58%" c="text-[#777]" w="w-[73px]" />
        </div>
      </div>
    </div>
    <div className="h-[200px] shrink-0 border-b border-[#333] border-r pl-[1px]">
      <div className="text-[12px] text-[#a8a8a8] leading-[18px]">资金控盘</div>
      <div className="flex">
        <div className="pl-[10px] pt-[18px] text-[12px] leading-[20px] w-[104px] shrink-0 text-[#555]">
          <div className="flex items-center gap-[4px] text-[#c83030]"><span className="w-[8px] h-[8px] rounded-full bg-[#b23030]" />高度控盘</div>
          <div className="flex items-center gap-[4px]"><span className="w-[8px] h-[8px] rounded-full bg-[#b5b030]" />平衡控盘</div>
          <div className="flex items-center gap-[4px]"><span className="w-[8px] h-[8px] rounded-full bg-[#2fb532]" />无序控盘</div>
        </div>
        <svg viewBox="318 180 342 345" className="w-[114px] h-[115px] mt-[23px]">
          <path d="M340 402V216Q340 186 370 186A265 265 0 0 1 654 452Q654 500 606 500H432A56 56 0 1 1 340 410" fill="none" stroke="#2a2a2a" strokeWidth="5" />
          <path d="M390 452V283A169 169 0 0 1 559 452Z" fill="#161616" />
          <path d="M390 228A224 224 0 0 1 502 258L475 306A169 169 0 0 0 390 283Z" fill="#2fb532" />
          <path d="M502 258A224 224 0 0 1 584 340L536 367.500A169 169 0 0 0 475 306Z" fill="#b5b030" />
          <path d="M584 340A224 224 0 0 1 614 452H559A169 169 0 0 0 536 367.500Z" fill="#b23030" />
          <path d="M390 212V452H632" fill="none" stroke="#444" strokeWidth="2" />
          <path d="M448 234L452 218M503 256L510 241M555 295L565 280M600 345L615 335M610 394L624 388" stroke="#555" strokeWidth="2" />
          <path d="M340 450L395 435L575 403L400 465L350 488Z" fill="#555" />
          <circle cx="390" cy="452" r="35" fill="#666" />
          <circle cx="390" cy="452" r="27" fill="#cfcfcf" />
          <text x="360" y="254" fontSize="36" fill="#666">0</text>
          <text x="520" y="488" fontSize="36" fill="#777">100</text>
        </svg>
      </div>
    </div>
    <div className="flex-1 border-r border-[#333] pl-[1px] min-h-0 overflow-hidden">
      <div className="text-[12px] text-[#a8a8a8] leading-[18px] pt-[1px] h-[19px]">资金动力</div>
      <svg viewBox="6 720 711 318" className="w-[237px] h-[106px] block mt-[19px]">
        <defs>
          <linearGradient id="arc" x1="0" y1="0" x2="1" y2="0">
            <stop offset="0" stopColor="#2fb532" />
            <stop offset="0.5" stopColor="#c8c030" />
            <stop offset="1" stopColor="#b23030" />
          </linearGradient>
        </defs>
        <path d="M201 1040A190 190 0 0 1 202 960A192 192 0 0 1 578 960A190 190 0 0 1 589 1040" fill="none" stroke="url(#arc)" strokeWidth="6" />
        <path d="M390 798V820M312 815L320 835M245 868L262 882M212 935L232 945M200 1008H225M468 815L460 835M538 868L522 882M580 935L558 945M587 1008H562" stroke="#555" strokeWidth="2.500" />
        <path d="M390 842L412 990H368Z" fill="#c8c8c8" />
        <circle cx="390" cy="1008" r="38" fill="#666" />
        <circle cx="390" cy="1008" r="29" fill="#cfcfcf" />
        <text x="374" y="776" fontSize="36" fill="#c8c030">中</text>
        <text x="152" y="1028" fontSize="36" fill="#2fb532">弱</text>
        <text x="602" y="1030" fontSize="36" fill="#b23030">强</text>
      </svg>
    </div>
  </div>
);

const sells = ["卖十", "卖九", "卖八", "卖七", "卖六", "卖五", "卖四", "卖三", "卖二", "卖一"];
const buys = [
  ["买一", "8.81", "700241", "−5261"], ["买二", "8.80", "480", "−9"], ["买三", "8.79", "1479", ""], ["买四", "8.78", "1344", ""], ["买五", "8.77", "670", ""],
  ["买六", "8.76", "180", ""], ["买七", "8.75", "976", "−3"], ["买八", "8.74", "370", ""], ["买九", "8.73", "566", ""], ["买十", "8.72", "893", "−3"],
];

const QuotePanel = () => (
  <div className="flex-1 min-w-0 mt-[22px] flex flex-col">
    <div className="h-[89px] shrink-0 bg-[radial-gradient(ellipse_110px_70px_at_50%_0%,#780000_0%,#3a1a1a_70%,#282828_100%)] relative pl-[9px]">
      <div className="flex items-end h-[42px]">
        <span className="text-[24px] font-bold leading-[38px] text-[#2f62b4]">梅雁吉祥</span>
        <span className="ml-[11px] text-[14px] font-bold text-[#f0f0f0] leading-[32px]">600868</span>
      </div>
      <div className="absolute right-0 top-[20px] w-[47px] h-[18px] rounded-l-[2px] bg-gradient-to-b from-[#ffd9a0] to-[#f4a040] text-[#5a2a00] text-[12px] text-center leading-[18px]">九宫图</div>
      <div className="flex items-baseline">
        <span className="text-[32px] text-[#ff3c3c] leading-[40px]">8.81</span>
        <span className="ml-[64px] text-[13px] font-bold text-[#ff3c3c] tracking-[0.4px]">0.80</span>
        <span className="ml-[15px] text-[13px] font-bold text-[#ff3c3c]">9.99%</span>
        <svg viewBox="0 0 12 13" className="w-[12px] h-[13px] ml-[5px] self-center mt-[14px]">
          <path d="M6 0C9 1 9.500 4 9.500 7L12 10H0L2.500 7C2.500 4 3 1 6 0ZM4.500 11H7.500L6 13Z" fill="#777" />
        </svg>
      </div>
    </div>
    <div className="h-[29px] shrink-0 flex items-center border-b border-[#333] pl-[5px] text-[15px] text-[#999]">
      <span className="w-[44px]">买档</span>
      <span className="w-[111px] font-bold text-[13px] text-[#b02828] tracking-[0.5px]">161</span>
      <span className="w-[44px]">卖档</span>
      <span className="font-bold text-[13px] text-[#2fb532]">0</span>
    </div>
    <div className="h-[204px] shrink-0 border-b border-[#333] pt-[2px]">
      {sells.map((s) => (
        <div key={s} className="flex items-center h-[20px] pl-[5px] text-[15px] text-[#a4a4a4]">
          <span className="w-[87px]">{s}</span>
          <span className="w-[12px] h-[1px] bg-[#22d022]" />
          <span className="ml-[58px] w-[12px] h-[1px] bg-[#c8c030]" />
        </div>
      ))}
    </div>
    <div className="h-[200px] shrink-0 border-b border-[#333]">
      {buys.map(([l, p, v, d], i) => (
        <div key={l} className="flex items-center h-[20px] pl-[5px] text-[#a4a4a4] font-bold text-[12.5px]">
          <span className="w-[50px] text-[15px] font-normal">{l}</span>
          <span className="w-[52px] text-right text-[#ff3c3c]">{p}</span>
          <span className={`w-[71px] text-right ${i === 0 ? "text-[#c88028]" : "text-[#c8bc30]"}`}>{v}</span>
          <span className="w-[55px] text-right text-[#2fb532]">{d}</span>
        </div>
      ))}
    </div>
    <div className="pt-[5px] text-[15px] text-[#a4a4a4] leading-[20px]">
      <div className="flex items-center h-[20px] pl-[4px]">
        <span className="w-[68px]">买均价</span>
        <span className="w-[38px] font-bold text-[13px] text-[#ff3c3c]">8.58</span>
        <span className="w-[78px]">卖均价</span>
        <span>—</span>
      </div>
      <div className="flex items-center h-[20px] pl-[4px]">
        <span className="w-[66px]">委买量</span>
        <span className="w-[40px] font-bold text-[13px] text-[#ff3c3c] whitespace-nowrap">105万</span>
        <span className="w-[78px]">委卖量</span>
        <span>—</span>
      </div>
    </div>
  </div>
);

export default function App() {
  return (
    <div className="w-[1352px] h-[656px] overflow-hidden bg-black flex flex-col font-['Liberation_Sans','Noto_Sans_CJK_SC',sans-serif]">
      <Header />
      <div className="flex flex-1 min-h-0">
        <Sidebar />
        <Main />
        <Gutter />
        <MoneyPanel />
        <QuotePanel />
      </div>
    </div>
  );
}
